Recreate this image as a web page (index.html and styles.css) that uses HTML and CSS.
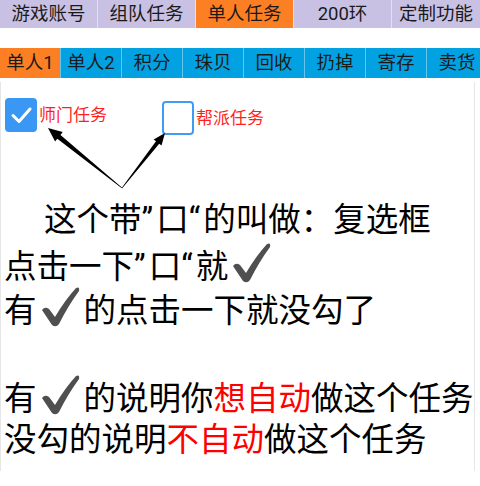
FILE: index.html
```html
<!DOCTYPE html>
<html lang="zh-CN">
<head>
  <meta charset="UTF-8" />
  <meta name="viewport" content="width=device-width, initial-scale=1" />
  <title>单人任务</title>
  <link rel="stylesheet" href="styles.css">
</head>
<body>

  <div class="topbar">
    <div class="tab">游戏账号</div>
    <div class="tab">组队任务</div>
    <div class="tab active">单人任务</div>
    <div class="tab">200环</div>
    <div class="tab last">定制功能</div>
  </div>

  <div class="subbar">
    <div class="sub active">单人1</div>
    <div class="sub">单人2</div>
    <div class="sub">积分</div>
    <div class="sub">珠贝</div>
    <div class="sub">回收</div>
    <div class="sub">扔掉</div>
    <div class="sub">寄存</div>
    <div class="sub">卖货</div>
  </div>

  <div class="help">
    <!-- 箭头指向两个复选框 -->
    <svg class="arrows" width="480" height="120" viewBox="0 82 480 120">
      <polygon points="122.2,187.8 60.5,134.9 62.7,132.1 48,128 55.1,141.5 57.3,138.7 121.8,188.2" fill="#000"/>
      <polygon points="121.8,187.8 156.0,141.3 153.7,139.4 165,133 161.5,145.6 159.2,143.7 122.2,188.2" fill="#000"/>
    </svg>

    <div class="checks">
      <label class="check-item">
        <span class="box on">
          <svg width="32" height="34" viewBox="0 0 32 34"><path d="M8 17.5 L14 23.5 L25 11" fill="none" stroke="#fff" stroke-width="3" stroke-linecap="round" stroke-linejoin="round"/></svg>
        </span>
        <span class="lbl">师门任务</span>
      </label>
      <label class="check-item second">
        <span class="box"></span>
        <span class="lbl">帮派任务</span>
      </label>
    </div>

    <div class="explain">
      <div class="line first">这个带<span class="q">”</span>口<span class="q">“</span>的叫做：复选框</div>
      <div class="line">点击一下<span class="q">”</span>口<span class="q">“</span>就<svg class="tick" width="47" height="42" viewBox="0 0 47 42"><path d="M5 24 Q8 20 12 23 L18 31 Q28 14 39 2 Q43 0 42 5 Q31 20 22 38 Q19 42 15 39 Z" fill="#4f4f4f"/></svg></div>
      <div class="line">有<svg class="tick" width="47" height="42" viewBox="0 0 47 42"><path d="M5 24 Q8 20 12 23 L18 31 Q28 14 39 2 Q43 0 42 5 Q31 20 22 38 Q19 42 15 39 Z" fill="#4f4f4f"/></svg>的点击一下就没勾了</div>
      <div class="line">&nbsp;</div>
      <div class="line">有<svg class="tick" width="47" height="42" viewBox="0 0 47 42"><path d="M5 24 Q8 20 12 23 L18 31 Q28 14 39 2 Q43 0 42 5 Q31 20 22 38 Q19 42 15 39 Z" fill="#4f4f4f"/></svg>的说明你<span class="red">想自动</span>做这个任务</div>
      <div class="line">没勾的说明<span class="red">不自动</span>做这个任务</div>
    </div>
  </div>

</body>
</html>
```

FILE: styles.css
```css
body {
  margin: 0;
  font-family: Roboto, "Noto Sans CJK SC", sans-serif;
  background-color: #fff;
  color: #1a1a1a;
  overflow: hidden;
}

/* 顶部主菜单 */
.topbar {
  display: flex;
  gap: 1px;
  height: 28px;
  background-color: #e4e0f0;
  overflow: hidden;
}

.tab {
  flex: 0 0 97px;
  background-color: #c9c1e3;
  font-size: 18.5px;
  line-height: 28px;
  text-align: center;
  white-space: nowrap;
}

.tab.last {
  flex: 1;
}

.tab.active,
.sub.active {
  background-color: #fd7f24;
}

/* 子菜单 */
.subbar {
  display: flex;
  gap: 1px;
  height: 30px;
  margin-top: 20px;
  background-color: #66c4ec;
  overflow: hidden;
}

.sub {
  flex: 0 0 60px;
  background-color: #02a2e2;
  font-size: 18.5px;
  line-height: 30px;
  text-align: center;
  white-space: nowrap;
}

/* 说明图片区域 */
.help {
  position: relative;
  height: 389px;
  margin-top: 4px;
  border-left: 1px solid #e6e6e6;
  border-right: 1px solid #e6e6e6;
  width: 475px;
  box-sizing: border-box;
}

.arrows {
  position: absolute;
  top: 0;
  left: -1px;
}

.checks {
  display: flex;
  align-items: flex-start;
  padding: 16px 0 0 4px;
}

.check-item {
  display: flex;
  align-items: center;
  gap: 2px;
}

.check-item.second {
  margin-left: 55px;
  margin-top: 3px;
}

.box {
  display: block;
  width: 32px;
  height: 34px;
  box-sizing: border-box;
  border: 2px solid #3f9cf4;
  border-radius: 4px;
  background-color: #fff;
}

.box.on {
  border: none;
  background-color: #3a97f3;
}

.box svg {
  display: block;
}

.lbl {
  color: #ff1f1f;
  font-size: 17px;
  line-height: 20px;
}

.explain {
  margin-top: 63px;
  padding-left: 3px;
  font-size: 32.5px;
  line-height: 44px;
  color: #000;
}

.line {
  white-space: nowrap;
  height: 44px;
}

.line.first {
  text-indent: 40px;
}

.q {
  letter-spacing: 3px;
}

.tick {
  vertical-align: -6px;
}

.red {
  color: #ff0000;
}
```
